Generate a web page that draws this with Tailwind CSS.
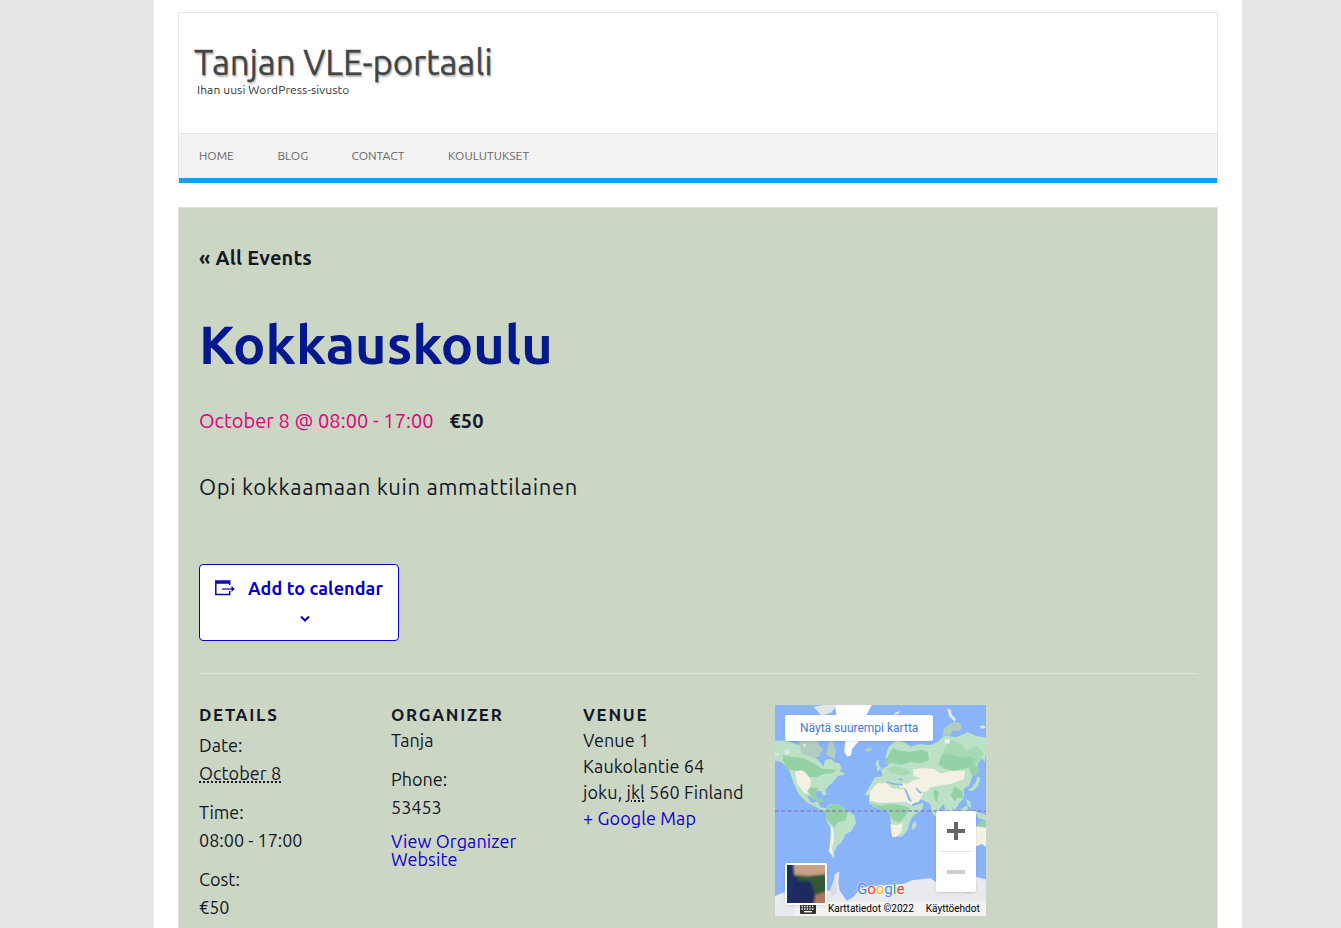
<!DOCTYPE html>
<html lang="fi">
<head>
<meta charset="utf-8">
<title>Kokkauskoulu</title>
<script src="https://cdn.jsdelivr.net/npm/@tailwindcss/browser@4"></script>
</head>
<body class="bg-[#e6e6e6] font-['Ubuntu','Noto_Sans',sans-serif] text-[#141827]">
<div class="ml-[154px] h-[928px] w-[1088px] overflow-hidden bg-white px-6 pt-3">
  <header class="h-[171px] border border-b-0 border-[#e6e6e6]">
    <div class="h-[120px] pl-[15px] pt-7">
      <h1 class="h-[44px] text-[35px] leading-[42px] tracking-[-0.18px] whitespace-nowrap text-[#444] [text-shadow:1px_2px_2px_rgba(0,0,0,0.3)] [-webkit-text-stroke:0.3px_#444]">Tanjan VLE-portaali</h1>
      <p class="-mt-[5px] ml-[3px] h-5 text-[12px] leading-[19px] tracking-[0.1px] text-[#333]">Ihan uusi WordPress-sivusto</p>
    </div>
    <nav class="flex h-[50px] border-t border-b-[5px] border-t-[#e6e6e6] border-b-[#16a1e7] bg-[#f2f2f2] pl-5 text-[12px] leading-[43px] text-[#666]">
      <a class="w-[78.5px]">HOME</a><a class="w-[74px]">BLOG</a><a class="w-[96.5px]">CONTACT</a><a class="tracking-[0.05px]">KOULUTUKSET</a>
    </nav>
  </header>
  <main class="mt-6 h-[760px] border border-[#e0e3dd] bg-[#ccd6c5] px-5 pt-[38px]">
    <p class="h-6 text-[20px] leading-6 font-bold tracking-[0.2px]">« All Events</p>
    <h2 class="mt-[42px] h-16 text-[54px] leading-[64px] font-bold text-[#03178f]">Kokkauskoulu</h2>
    <p class="mt-[33px] flex h-6 gap-4 text-[20px] leading-6"><span class="tracking-[0.04px] text-[#df007b]">October 8 @ 08:00 - 17:00</span><span class="font-bold">€50</span></p>
    <p class="mt-10 h-7 text-[22px] leading-7 tracking-[0.65px]">Opi kokkaamaan kuin ammattilainen</p>
    <button class="mt-[63px] block h-[77px] w-[200px] rounded border border-[#0a00c8] bg-white pl-[15px] text-left text-[18px] font-bold text-[#0a00c8]">
      <span class="-mt-1.5 flex h-6 items-center gap-[13px] whitespace-nowrap"><svg class="shrink-0" width="20" height="16" viewBox="0 0 20 16" fill="none" stroke="#0b04b6"><path d="M14.7 5V1H.8v13.5h13.9V11" stroke-width="1.5"/><path d="M1 2.5h14" stroke-width="2.5"/><path d="M7 9h11" stroke-width="1.2"/><path d="M16.5 6l3.2 3-3.2 3z" fill="#0b04b6" stroke="none"/></svg><span class="tracking-[0.1px]">Add to calendar</span></span>
      <svg class="mt-[15px] ml-[84px]" width="12" height="8" viewBox="0 0 12 8" fill="none" stroke="#0b04b6" stroke-width="2"><path d="M2 1.5l4 4 4-4"/></svg>
    </button>
    <div class="mt-8 h-px bg-[#e0e5dc]"></div>
    <section class="flex pt-7 text-[18px] leading-[26px] whitespace-nowrap">
      <div class="w-48">
        <h3 class="h-[25px] text-[17px] font-bold tracking-[1.7px]">DETAILS</h3>
        <dl class="mt-1 leading-7">
          <dt>Date:</dt><dd><span class="tracking-[0.07px] underline decoration-dotted decoration-2 underline-offset-1">October 8</span></dd>
          <dt class="mt-[11px]">Time:</dt><dd>08:00 - 17:00</dd>
          <dt class="mt-[11px]">Cost:</dt><dd>€50</dd>
        </dl>
      </div>
      <div class="w-48">
        <h3 class="h-[25px] text-[17px] font-bold tracking-[1.7px]">ORGANIZER</h3>
        <p>Tanja</p>
        <p class="mt-3 leading-7">Phone:</p><p class="leading-7">53453</p>
        <p class="mt-[11px] leading-[18px] tracking-[0.07px] text-[#0f00cf]">View Organizer<br>Website</p>
      </div>
      <div class="w-48">
        <h3 class="h-[25px] text-[17px] font-bold tracking-[1.7px]">VENUE</h3>
        <div class="tracking-[0.1px]"><p>Venue 1</p><p>Kaukolantie 64</p>
        <p>joku, <span class="underline decoration-dotted decoration-2 underline-offset-1">jkl</span> 560 Finland</p>
        <p class="text-[#0f00cf]">+ Google Map</p></div>
      </div>
      <div class="relative mt-[3px] h-[211px] w-[211px] overflow-hidden bg-[#8ab4f8] font-[Roboto,sans-serif]">
        <svg class="absolute inset-0" width="211" height="211" viewBox="15 15 633 633">
          <path fill="#fff" d="M195 15H305L292 40 285 60V110L262 128 246 148 243 166 232 170 223 155 226 120 205 90Z"/>
          <path fill="#dfe7e6" d="M130 20l30-5h40l-15 22-30 10zM375 38l15-5-5 9-15 2zM532 25l10 4 4 16 12 12-6 7-15-16zM628 80l12-4 8 6-12 5z"/>
          <path fill="#b2cdbd" d="M287 146l14-3 4 7-9 5-12-3zM88 125l55-8 3 20 14 10-14 24-30 2-28-12zM168 162l10-37 10-3 10 30-5 25-12-5z"/>
          <path fill="#bbe2c6" d="M15 122h35l40 15 4 25 42 12 14 12 10 14 5-20 17-4 14 12 12 2 8 16-8 8 12 3 4 8-20 2-14 18-16 15-8 12 4 10-8 6-11-15-29 3-9 16 11 16 19-3 9 17 30 5 16 14-20-2-26-10-42-22-26-28-13-30-14-39-23-24-21-4z"/>
          <path fill="#94d2a5" d="M40 165l25 5 35 5 35 17 22 14 43 4-12 10-28 2-22 10-23-2-31-17-24-4-10-2-12-27zM123 262l22 3-8 18 8 12 20 9-15 4-38-20-20-30z"/>
          <path fill="#f5f0e4" d="M75 214l20-3 13 8 15 20-2 22-10 12 12 16-22-12-20-25z"/>
          <path fill="#e0e8e4" d="M42 150l14-2 4 12-12 6zM15 158l14 4-8 6-6-3zM98 130l12 4-8 8z"/>
          <path fill="#bbe2c6" d="M166 327l14-15 28 2 17 12 28 20 5 22-14 26-17 9-12 23-14 12-9 20 2 18-8-5-7-23 6-62-15-21z"/>
          <path fill="#94d2a5" d="M165 330l18-18 33 5 18 21-9 25-21 3-10 17-22-22z"/>
          <path fill="#f5f0e4" d="M182 375l9 17 1 34-6 17 4 25-13-12 5-45z"/>
          <path fill="#bbe2c6" d="M315 232l23-3-5-20 20-12 9-18-17-5 10-32 25-22 25 8 18 12 25-8 32 4 22-10 22-19 35 5 35-16 25 12 45 8v28l-16 17-4 25-8-12-14 20 4 22-16 7-12 32-17 12 2 25-15 17-12 21-9-8-7 18 15 25-12-5-17-29-5-19-15 17-7 23-10-9-9-32-22-11-22-6-31-7-30 11-14-17-14 3-17-10-16 14-30-3z"/>
          <path fill="#a5dab3" d="M520 150l24-30 26 10 20 22 30-15 20 20-14 30-20 12-30-8-30 8-30-12zM350 205l25-8 28 8 20 14-25 8-30-6z"/>
          <path fill="#94d2a5" d="M345 188l14-30 11-13 24 8 26 2 34-6 20 8 3 25-25 8-30-4-28 9-32-6-12 6zM515 165l29-3 30 12 25-6 16 10-8 22-26 7-31 5-30-7-15-12zM553 258l24 16 5 24-18-7-10 13-12-18zM491 267l16 9-5 33-10-15zM598 205l16-12 14 14-10 22-14-4z"/>
          <path fill="#b2cdbd" d="M522 85l31-21 21 9-2 18-26 3-7 14-21-2z"/>
          <path fill="#f5f0e4" d="M429 208l33-4 29 3 21 14 28-8 45-1-3 25-33 13-42 7-25 5-13 14-19-2-23-7-36-5-6-11 30-1 17-10 20-3-22-11zM525 118l14-2v15l-15-1zM301 274l22-25 27 1 17 15 35 3 13 31 16 10-14 13H354L322 309 297 302z"/>
          <path fill="#f5f0e4" d="M406 267l26-6 28 20-14 24-23 7-9-23z"/>
          <path fill="#bbe2c6" d="M298 302l35 7 45-2 31-1 19 12 33-10-6 22-26 18-10 19-5 21-17 21-15 1-17-26-5-40-12-18-30-2-19-13z"/>
          <path fill="#94d2a5" d="M302 310l30 7 35-6 33 6 20 8-14 23-18 20-20-8-15-29-30-5z"/>
          <path fill="#f5f0e4" d="M361 372l18 4 20-7-5 28-17 15-11-2z"/><path fill="#bbe2c6" d="M427 372l11-10 1 14-8 14-6-5z"/>
          <path fill="#bbe2c6" d="M316 193l6-14 6 3-3 10 9 13-8 7-7-1 3-10zM592 270l15-9 11-17 4-15 9 5-6 25-18 14zM528 312l22 14 10 25-20-15zM567 332l25-17 3 25-20 9zM586 296l14 8 4 20-10-7zM614 332l35 14v17l-25-10z"/>
          <path fill="#f5f0e4" d="M618 382l15-15h15v74l-12-9-18 7z"/><path fill="#94d2a5" d="M620 379l17-18 11 2v20z"/>
          <path stroke="#8ab4f8" stroke-width="5" fill="none" d="M406 269l17 36M438 264l15 17M350 246l22 6 26 2M386 236l12 4"/>
          <path fill="#e8eaed" d="M15 588l20-8 30-10 50-5 40 5 25 2 12-28 2-20 14-10-3 35 5 25 20 28 20-11 22-26 30-7 60-4 40-3 25-10 55-6 18 13 40-12 55-12 55 15v111H15z"/>
          <path fill="#dadde2" d="M182 565l15-42 3 57-18 10zM498 560l25-12 20 24zM555 571l45-18 25 7-30 22z"/>
          <path stroke="#8d82bb" stroke-width="4" stroke-dasharray="12 7" d="M15 333H648"/>
        </svg>
        <a class="absolute top-2.5 left-2.5 h-[26px] w-[148px] rounded-xs bg-white pl-[15px] text-[12px] leading-[26px] text-[#3f78dc] shadow-sm">Näytä suurempi kartta</a>
        <div class="absolute top-[106px] left-[161px] flex h-[81px] w-10 flex-col items-center rounded-xs bg-white shadow"><svg width="40" height="81" viewBox="0 0 40 81"><path stroke="#666" stroke-width="4" d="M11 20h18M20 11v18"/><path stroke="#e6e6e6" d="M5 40.5h30"/><path stroke="#ccc" stroke-width="4" d="M11 61h18"/></svg></div>
        <div class="absolute top-[176px] left-[82px] text-[15px] leading-4 [text-shadow:0_0_2px_white,0_0_1px_white]"><span class="text-[#4285f4]">G</span><span class="text-[#ea4335]">o</span><span class="text-[#fbbc05]">o</span><span class="text-[#4285f4]">g</span><span class="text-[#34a853]">l</span><span class="text-[#ea4335]">e</span></div>
        <div class="absolute right-0 bottom-0 flex h-3.5 w-[191px] bg-[#f5f5f5]/85 text-[10px] leading-3.5 text-black">
          <svg class="mt-0.5 ml-[5px]" width="16" height="10" viewBox="0 0 16 10"><rect width="16" height="10" rx="1" fill="#333"/><path stroke="#fff" stroke-width="1.4" stroke-dasharray="1.4 1.2" d="M1.5 2.5h13M1.5 5h13"/><path stroke="#fff" stroke-width="1.3" d="M4 7.7h8"/></svg>
          <span class="ml-3">Karttatiedot ©2022</span><span class="ml-3">Käyttöehdot</span>
        </div>
        <svg class="absolute top-[158px] left-2.5 rounded-xs shadow" width="42" height="42" viewBox="0 0 42 42"><defs><filter id="soft"><feGaussianBlur stdDeviation="1.1"/></filter><clipPath id="tile"><path d="M2 2h38v38H2z"/></clipPath></defs><path fill="#fff" d="M0 0h42v42H0z"/><g clip-path="url(#tile)"><path fill="#1c2e63" d="M2 2h38v38H2z"/><g filter="url(#soft)"><path fill="#c9a184" d="M8-2h36v18L9 12z"/><path fill="#315834" d="M9 12l14 1 20-2v21H30l-4-12-13-3z"/><path fill="#ad795b" d="M30 32l14-4v14H29z"/><path fill="#1a2b5c" d="M11 18l14 0 5 13-2 12H10z"/></g></g></svg>
      </div>
    </section>
  </main>
</div>
</body>
</html>
